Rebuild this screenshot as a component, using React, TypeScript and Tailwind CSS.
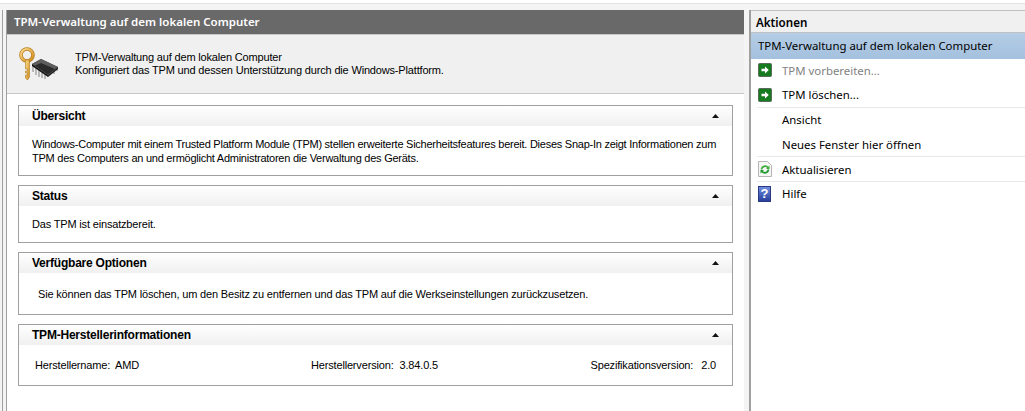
const bodyFont = "font-['Liberation_Sans',Arial,sans-serif]";
const bodyText = `${bodyFont} text-[11px] tracking-[-0.17px] text-black`;

function Caret() {
  return (
    <svg width="7" height="4" viewBox="0 0 7 4" className="block">
      <path d="M3.5 0 L7 4 L0 4 Z" fill="#111" />
    </svg>
  );
}

function Section({ title, height, children }: { title: string; height: string; children: React.ReactNode }) {
  return (
    <div className={`border border-[#a0a0a0] bg-white ${height}`}>
      <div className="flex h-[20px] items-center justify-between bg-gradient-to-b from-white to-[#f0f0f0] pl-[13px] pr-[13px]">
        <span className={`${bodyFont} text-[12px] font-bold tracking-[-0.22px] text-black`}>{title}</span>
        <Caret />
      </div>
      {children}
    </div>
  );
}

function KeyChipIcon() {
  return (
    <svg width="40" height="38" viewBox="0 0 40 38" className="block">
      <defs>
        <linearGradient id="keyGold" x1="0" y1="0" x2="1" y2="1">
          <stop offset="0" stopColor="#fbdc8e" />
          <stop offset="1" stopColor="#d08c1e" />
        </linearGradient>
      </defs>
      {/* chip */}
      <path d="M14 21v6M17 23v7M20 25v7M23 27v6M26 29v5M35 25v4M38 23v3" stroke="#9a9a9a" strokeWidth="1.3" />
      <path d="M13 19 L22 14 L39 22 L29 30 Z" fill="#2b2b2b" />
      <path d="M13 19 L22 14 L39 22 L36 24 L22 18 L15 21 Z" fill="#5e5e5e" />
      <path d="M13 19 L29 30 L29 32 L13 21 Z" fill="#111" />
      <path d="M29 30 L39 22 L39 24 L29 32 Z" fill="#1c1c1c" />
      {/* key */}
      <circle cx="8" cy="10" r="6" fill="none" stroke="#b8791b" strokeWidth="3.6" />
      <circle cx="8" cy="10" r="6" fill="none" stroke="url(#keyGold)" strokeWidth="2.2" />
      <path d="M6.5 15 H10.5 V32 L8.5 35 L6.5 33 V30 H8.5 V28 H6.5 V26 H8.5 V24 H6.5 Z" fill="url(#keyGold)" stroke="#b07a18" strokeWidth="0.6" />
    </svg>
  );
}

function GreenArrow() {
  return (
    <svg width="14" height="14" viewBox="0 0 14 14" className="block">
      <rect x="0.5" y="0.5" width="13" height="13" rx="1" fill="#167a1f" stroke="#5b6b5b" />
      <path d="M3.5 5.8 H7 V3.5 L10.8 7 L7 10.5 V8.2 H3.5 Z" fill="#fff" />
    </svg>
  );
}

function RefreshIcon() {
  return (
    <svg width="14" height="16" viewBox="0 0 14 16" className="block">
      <path d="M0.5 0.5 H9.5 L13.5 4.5 V15.5 H0.5 Z" fill="#f6f6f6" stroke="#b5b5b5" />
      <path d="M3.6 8.5 A3.5 3.5 0 0 1 10 6.8" fill="none" stroke="#3fae3f" strokeWidth="1.8" />
      <path d="M10.4 8.5 A3.5 3.5 0 0 1 4 10.2" fill="none" stroke="#1f9a2e" strokeWidth="1.8" />
      <path d="M11.5 4.5 V8 H8 Z" fill="#3fae3f" />
      <path d="M2.5 12.5 V9 H6 Z" fill="#1f9a2e" />
    </svg>
  );
}

function HelpIcon() {
  return (
    <div className={`flex h-[16px] w-[13px] items-center justify-center border border-[#2b3a80] bg-gradient-to-b from-[#6f8de0] to-[#2c3f9c] ${bodyFont} text-[13px] font-bold leading-none text-white`}>
      ?
    </div>
  );
}

function ActionRow({ icon, label, muted, sep }: { icon?: React.ReactNode; label: string; muted?: boolean; sep?: boolean }) {
  return (
    <div className={`flex h-[24.6px] items-center ${sep ? "ml-[6px] border-t border-[#e8e8e8]" : ""}`}>
      <div className={`flex shrink-0 items-center ${sep ? "w-[25px] pl-[1px]" : "w-[31px] pl-[7px]"}`}>{icon}</div>
      <span className={`font-['Noto_Sans',sans-serif] text-[11.4px] ${muted ? "text-[#7f7f7f]" : "text-black"}`}>{label}</span>
    </div>
  );
}

export default function App() {
  return (
    <div className="flex h-[411px] w-[1025px] flex-col overflow-hidden bg-white">
      <div className="h-[4px] border-b border-[#e3e3e3]" />
      <div className="flex min-h-0 flex-1 bg-[#f4f4f4] pt-[6px]">
        {/* left pane */}
        <div className="ml-[2px] flex w-[742px] shrink-0 flex-col border-l border-[#a0a0a0] pl-[3px]">
          <div className="flex min-h-0 flex-1 flex-col border-l border-[#a0a0a0] bg-white">
            <div className="flex h-[24px] shrink-0 items-center bg-[#696969] pl-[7px] font-['Noto_Sans',sans-serif] text-[11.5px] font-semibold text-white">
              TPM-Verwaltung auf dem lokalen Computer
            </div>
            <div className="flex h-[60px] shrink-0 items-center border-t border-b border-[#c8c8c8] bg-[#f0f0f0]">
              <div className="ml-[12px] w-[56px]"><KeyChipIcon /></div>
              <div className={`${bodyText} leading-[13px]`}>
                <div>TPM-Verwaltung auf dem lokalen Computer</div>
                <div>Konfiguriert das TPM und dessen Unterstützung durch die Windows-Plattform.</div>
              </div>
            </div>
            <div className="flex flex-col gap-[9px] pl-[11px] pr-[11px] pt-[11px]">
              <Section title="Übersicht" height="h-[71px]">
                <div className={`${bodyFont} whitespace-nowrap px-[13px] pt-[11px] text-[11px] leading-[14px] tracking-[-0.25px] text-black`}>
                  Windows-Computer mit einem Trusted Platform Module (TPM) stellen erweiterte Sicherheitsfeatures bereit. Dieses Snap-In zeigt Informationen zum
                  <br />
                  TPM des Computers an und ermöglicht Administratoren die Verwaltung des Geräts.
                </div>
              </Section>
              <Section title="Status" height="h-[58px]">
                <div className={`${bodyText} px-[13px] pt-[11px] leading-[14px]`}>Das TPM ist einsatzbereit.</div>
              </Section>
              <Section title="Verfügbare Optionen" height="h-[63px]">
                <div className={`${bodyText} pl-[19px] pt-[14px] leading-[14px]`}>
                  Sie können das TPM löschen, um den Besitz zu entfernen und das TPM auf die Werkseinstellungen zurückzusetzen.
                </div>
              </Section>
              <Section title="TPM-Herstellerinformationen" height="h-[62px]">
                <div className={`${bodyText} flex pl-[16px] pr-[16px] pt-[13px] leading-[14px]`}>
                  <div className="flex w-[276px] gap-[5px]"><span>Herstellername:</span><span>AMD</span></div>
                  <div className="flex gap-[6px]"><span>Herstellerversion:</span><span>3.84.0.5</span></div>
                  <div className="ml-auto flex gap-[8px]"><span>Spezifikationsversion:</span><span>2.0</span></div>
                </div>
              </Section>
            </div>
          </div>
        </div>
        {/* right pane */}
        <div className="ml-[5px] flex min-w-0 flex-1 flex-col border-l-2 border-[#a0a0a0] bg-white">
          <div className="flex h-[23px] shrink-0 items-center border-y border-[#c0c0c0] bg-[#f0f0f0] pl-[5px] pt-[2px] font-['Noto_Sans',sans-serif] text-[11.6px] font-semibold text-black">
            Aktionen
          </div>
          <div className="flex h-[26px] shrink-0 items-center bg-gradient-to-b from-[#b5cde6] to-[#a3c0de] pl-[7px] font-['Noto_Sans',sans-serif] text-[11.4px] text-black">
            TPM-Verwaltung auf dem lokalen Computer
          </div>
          <div className="-mt-[1px] flex flex-col">
            <ActionRow icon={<GreenArrow />} label="TPM vorbereiten..." muted />
            <ActionRow icon={<GreenArrow />} label="TPM löschen..." />
            <ActionRow label="Ansicht" sep />
            <ActionRow label="Neues Fenster hier öffnen" />
            <ActionRow icon={<RefreshIcon />} label="Aktualisieren" sep />
            <ActionRow icon={<HelpIcon />} label="Hilfe" sep />
          </div>
        </div>
      </div>
    </div>
  );
}
